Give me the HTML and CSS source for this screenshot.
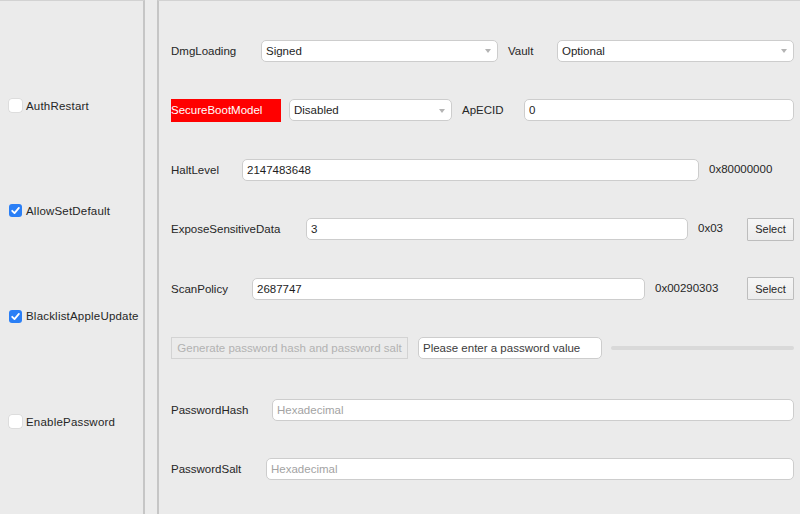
FILE: index.html
```html
<!DOCTYPE html>
<html lang="en">
<head>
  <meta charset="UTF-8" />
  <title>Misc Security</title>
  <link rel="stylesheet" href="styles.css">
</head>
<body>
  <div class="window">

    <!-- CHECKBOXES -->
    <div class="panel panel-left">
      <label class="check-row"><span class="box"></span>AuthRestart</label>
      <label class="check-row"><span class="box on"><svg viewBox="0 0 13 13"><path d="M3.2 6.8 L5.5 9.1 L9.9 3.9" /></svg></span>AllowSetDefault</label>
      <label class="check-row"><span class="box on"><svg viewBox="0 0 13 13"><path d="M3.2 6.8 L5.5 9.1 L9.9 3.9" /></svg></span>BlacklistAppleUpdate</label>
      <label class="check-row"><span class="box"></span>EnablePassword</label>
    </div>

    <!-- FIELDS -->
    <div class="panel panel-right">
      <div class="row">
        <span class="lbl" style="width:90px">DmgLoading</span>
        <div class="combo"><span class="combo-text">Signed</span><span class="arrow"></span></div>
        <span class="lbl lbl-gap" style="width:49px">Vault</span>
        <div class="combo"><span class="combo-text">Optional</span><span class="arrow"></span></div>
      </div>

      <div class="row">
        <span class="red-lbl">SecureBootModel</span>
        <div class="combo combo-sm"><span class="combo-text">Disabled</span><span class="arrow"></span></div>
        <span class="lbl lbl-gap" style="width:62px">ApECID</span>
        <div class="field"><span>0</span></div>
      </div>

      <div class="row">
        <span class="lbl" style="width:71px">HaltLevel</span>
        <div class="field"><span>2147483648</span></div>
        <span class="hex" style="width:85px">0x80000000</span>
      </div>

      <div class="row">
        <span class="lbl" style="width:135px">ExposeSensitiveData</span>
        <div class="field"><span>3</span></div>
        <span class="hex" style="width:49px">0x03</span>
        <button class="btn">Select</button>
      </div>

      <div class="row row-up">
        <span class="lbl" style="width:81px">ScanPolicy</span>
        <div class="field"><span>2687747</span></div>
        <span class="hex" style="width:92px">0x00290303</span>
        <button class="btn">Select</button>
      </div>

      <div class="row">
        <button class="btn-disabled">Generate password hash and password salt</button>
        <div class="field field-pw"><span>Please enter a password value</span></div>
        <div class="progress"></div>
      </div>

      <div class="row row-down">
        <span class="lbl" style="width:101px">PasswordHash</span>
        <div class="field"><span class="ph">Hexadecimal</span></div>
      </div>

      <div class="row">
        <span class="lbl" style="width:95px">PasswordSalt</span>
        <div class="field"><span class="ph">Hexadecimal</span></div>
      </div>
    </div>

  </div>
</body>
</html>
```

FILE: styles.css
```css
body {
  margin: 0;
  background: #ececec;
  font-family: 'Liberation Sans', Arial, sans-serif;
  font-size: 11.5px;
  color: #262626;
}

.window {
  display: flex;
  height: 514px;
  gap: 12px;
}

.panel {
  background: #ebebeb;
  border-top: 1px solid #d2d2d2;
  box-sizing: border-box;
  height: 514px;
}

.panel-left {
  width: 145px;
  border-right: 2px solid #c6c6c6;
  padding-top: 52px;
  display: flex;
  flex-direction: column;
}

.check-row {
  height: 105.3px;
  display: flex;
  align-items: center;
  padding-left: 9px;
  gap: 4px;
  letter-spacing: 0.2px;
}

.box {
  width: 13px;
  height: 13px;
  border-radius: 3px;
  background: #fff;
  box-shadow: 0 0 0 0.5px #cfcfcf;
  display: flex;
}

.box.on {
  background: #2a7ff6;
  box-shadow: none;
}

.box svg {
  width: 13px;
  height: 13px;
}

.box svg path {
  fill: none;
  stroke: #fff;
  stroke-width: 1.8;
  stroke-linecap: round;
  stroke-linejoin: round;
}

.panel-right {
  flex: 1;
  border-left: 2px solid #c6c6c6;
  padding: 20px 6px 0 12px;
}

.row {
  height: 59.5px;
  display: flex;
  align-items: center;
}

/* the password group sits a bit lower in the original */
.row-up {
  height: 59px;
}

.row-down {
  height: 62px;
  padding-top: 2px;
  box-sizing: border-box;
}

.lbl {
  flex: none;
  white-space: nowrap;
}

.lbl-gap {
  margin-left: 10px;
}

.combo, .field {
  flex: 1;
  height: 22px;
  box-sizing: border-box;
  background: #fff;
  border: 1px solid #cdcdcd;
  border-radius: 5px;
  display: flex;
  align-items: center;
  padding: 0 6px 0 4px;
  color: #1e1e1e;
}

.combo-sm {
  flex: none;
  width: 163px;
  margin-left: 8px;
}

.combo-text {
  flex: 1;
}

.arrow {
  width: 0;
  height: 0;
  border-left: 3.5px solid transparent;
  border-right: 3.5px solid transparent;
  border-top: 4px solid #b4b4b4;
  margin-top: 1px;
}

.red-lbl {
  flex: none;
  width: 110px;
  height: 23px;
  background: #ff0000;
  color: #fff;
  display: flex;
  align-items: center;
  box-sizing: border-box;
}

.hex {
  flex: none;
  margin-left: 10px;
  margin-bottom: 2px;
  white-space: nowrap;
}

.btn {
  flex: none;
  width: 47px;
  height: 23px;
  font-family: inherit;
  font-size: 11px;
  color: #262626;
  background: linear-gradient(#f6f6f6, #ececec);
  border: 1px solid #bdbdbd;
  border-radius: 1px;
  padding: 0;
}

.btn-disabled {
  flex: none;
  width: 237px;
  height: 22px;
  font-family: inherit;
  font-size: 11.5px;
  color: #b2b2b2;
  background: #ebebeb;
  border: 1px solid #d3d3d3;
  padding: 0;
}

.field-pw {
  flex: none;
  width: 184px;
  margin-left: 10px;
  color: #3c3c3c;
}

.progress {
  flex: 1;
  height: 4px;
  margin-left: 9px;
  border-radius: 2px;
  background: #d9d9d9;
}

.ph {
  color: #a3a3a3;
}
```
